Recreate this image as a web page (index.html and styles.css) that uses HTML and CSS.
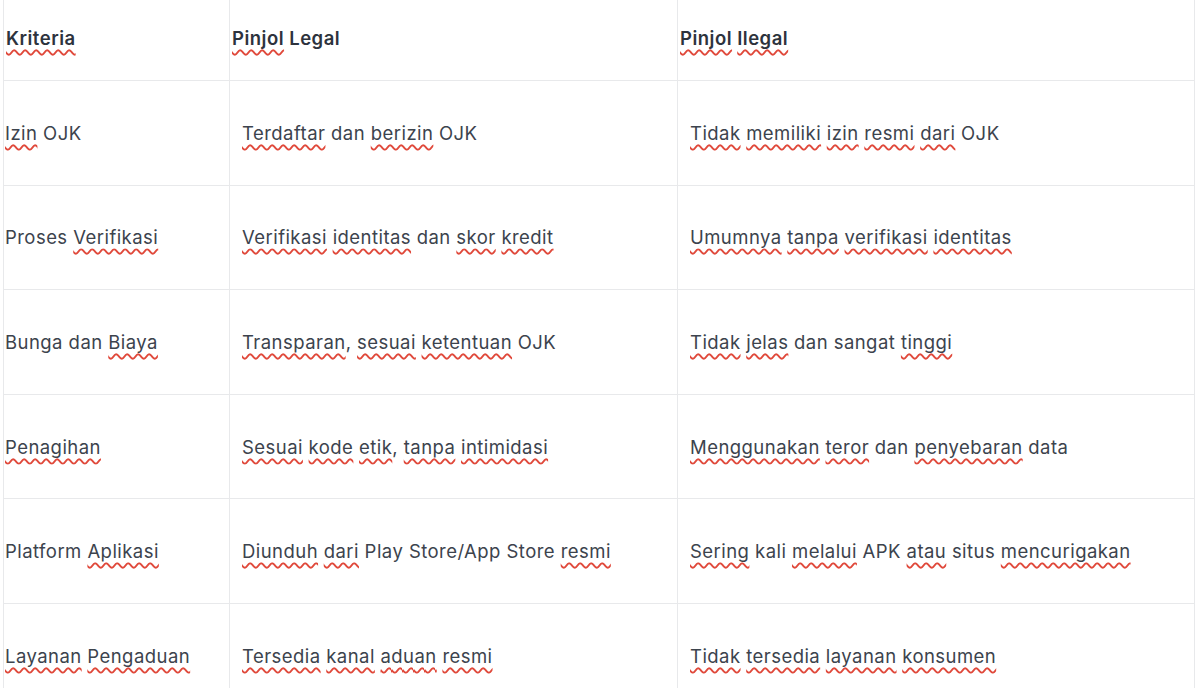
FILE: index.html
```html
<!DOCTYPE html>
<html lang="id">
<head>
<meta charset="utf-8">
<title>Pinjol Legal vs Ilegal</title>
<link rel="stylesheet" href="styles.css">
</head>
<body>
<table class="cmp">
  <colgroup>
    <col class="c1"><col class="c2"><col class="c3">
  </colgroup>
  <thead>
    <tr>
      <th><span class="sp">Kriteria</span></th>
      <th><span class="sp">Pinjol</span> Legal</th>
      <th><span class="sp">Pinjol</span> <span class="sp">Ilegal</span></th>
    </tr>
  </thead>
  <tbody>
    <tr>
      <td><span class="sp">Izin</span> OJK</td>
      <td><span class="sp">Terdaftar</span> dan <span class="sp">berizin</span> OJK</td>
      <td><span class="sp">Tidak</span> <span class="sp">memiliki</span> <span class="sp">izin</span> <span class="sp">resmi</span> <span class="sp">dari</span> OJK</td>
    </tr>
    <tr>
      <td>Proses <span class="sp">Verifikasi</span></td>
      <td><span class="sp">Verifikasi</span> <span class="sp">identitas</span> dan <span class="sp">skor</span> <span class="sp">kredit</span></td>
      <td><span class="sp">Umumnya</span> <span class="sp">tanpa</span> <span class="sp">verifikasi</span> <span class="sp">identitas</span></td>
    </tr>
    <tr>
      <td>Bunga dan <span class="sp">Biaya</span></td>
      <td><span class="sp">Transparan</span>, <span class="sp">sesuai</span> <span class="sp">ketentuan</span> OJK</td>
      <td><span class="sp">Tidak</span> <span class="sp">jelas</span> dan sangat <span class="sp">tinggi</span></td>
    </tr>
    <tr>
      <td><span class="sp">Penagihan</span></td>
      <td><span class="sp">Sesuai</span> <span class="sp">kode</span> <span class="sp">etik</span>, <span class="sp">tanpa</span> <span class="sp">intimidasi</span></td>
      <td><span class="sp">Menggunakan</span> <span class="sp">teror</span> dan <span class="sp">penyebaran</span> data</td>
    </tr>
    <tr>
      <td>Platform <span class="sp">Aplikasi</span></td>
      <td><span class="sp">Diunduh</span> <span class="sp">dari</span> Play Store/App Store <span class="sp">resmi</span></td>
      <td><span class="sp">Sering</span> kali <span class="sp">melalui</span> APK <span class="sp">atau</span> situs <span class="sp">mencurigakan</span></td>
    </tr>
    <tr>
      <td><span class="sp">Layanan</span> <span class="sp">Pengaduan</span></td>
      <td><span class="sp">Tersedia</span> <span class="sp">kanal</span> <span class="sp">aduan</span> <span class="sp">resmi</span></td>
      <td><span class="sp">Tidak</span> <span class="sp">tersedia</span> <span class="sp">layanan</span> <span class="sp">konsumen</span></td>
    </tr>
  </tbody>
</table>
</body>
</html>
```

FILE: styles.css
```css
html, body {
  margin: 0;
  padding: 0;
  background: #ffffff;
}

body {
  font-family: Inter, "Noto Sans", "Liberation Sans", sans-serif;
  color: #3c434d;
  overflow: hidden;
}

.cmp {
  margin-left: 3px;
  width: 1191px;
  border-collapse: collapse;
  table-layout: fixed;
  border-left: 1px solid #e8e9eb;
  border-right: 1px solid #e8e9eb;
}

.c1 { width: 226px; }
.c2 { width: 448px; }
.c3 { width: 517px; }

.cmp th,
.cmp td {
  border-left: 1px solid #e8e9eb;
  border-bottom: 1px solid #e8e9eb;
  vertical-align: middle;
  text-align: left;
  font-size: 18.5px;
  line-height: 26px;
  letter-spacing: 0.45px;
}

.cmp th {
  height: 76px;
  padding: 0 0 4px 2px;
  font-weight: 600;
  letter-spacing: 0.5px;
  color: #2d333d;
}

.cmp td {
  height: 103.6px;
  padding: 0 0 0 12px;
  font-weight: 400;
}

.cmp td:first-child {
  padding-left: 1px;
}

.sp {
  text-decoration: underline wavy #e0493b;
  text-decoration-thickness: 1.5px;
  text-underline-offset: 4px;
  text-decoration-skip-ink: none;
}
```
